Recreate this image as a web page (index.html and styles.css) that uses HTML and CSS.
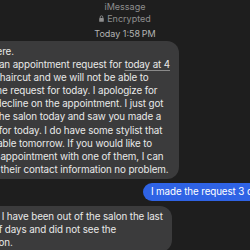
FILE: index.html
```html
<!DOCTYPE html>
<html lang="en">
<head>
<meta charset="utf-8">
<title>Messages</title>
<link rel="stylesheet" href="styles.css">
</head>
<body>
<div class="screen">
  <header class="head">
    <div class="service">iMessage</div>
    <div class="enc"><svg class="lock" width="5" height="7" viewBox="0 0 5 7"><path d="M1.2 3.2V2.1a1.3 1.3 0 0 1 2.6 0v1.1" fill="none" stroke="currentColor" stroke-width="0.9"/><rect x="0.2" y="3.1" width="4.6" height="3.7" rx="0.6" fill="currentColor"/></svg><span>Encrypted</span></div>
    <div class="time">Today 1:58&#8239;PM</div>
  </header>
  <div class="thread">
    <div class="bubble in">
      <span class="ln">Hi, Tia here.</span>
      <span class="ln">Just got an appointment request for <span class="dd">today at 4</span></span>
      <span class="ln">pm for a haircut and we will not be able to</span>
      <span class="ln">accept the request for today. I apologize for</span>
      <span class="ln">the late decline on the appointment. I just got</span>
      <span class="ln">back to the salon today and saw you made a</span>
      <span class="ln">booking for today. I do have some stylist that</span>
      <span class="ln">are available tomorrow. If you would like to</span>
      <span class="ln">make an appointment with one of them, I can</span>
      <span class="ln">give you their contact information no problem.</span>
    </div>
    <div class="bubble out">I made the request 3 days ago.</div>
    <div class="bubble in">
      <span class="ln">Oh sorry I have been out of the salon the last</span>
      <span class="ln">couple of days and did not see the</span>
      <span class="ln">notification.</span>
    </div>
  </div>
</div>
</body>
</html>
```

FILE: styles.css
```css
html, body {
  margin: 0;
  padding: 0;
  background: #1e1e1e;
}

body {
  font-family: Inter, "Noto Sans", sans-serif;
}

.screen {
  width: 250px;
  height: 250px;
  overflow: hidden;
}

.head {
  display: flex;
  flex-direction: column;
  align-items: center;
  padding-top: 1.25px;
  font-size: 9px;
  line-height: 11.5px;
  color: #8e8e8e;
}

.enc {
  display: flex;
  align-items: center;
  gap: 3px;
}

.lock {
  display: block;
}

.time {
  margin-top: 4px;
  color: #b4b4b4;
}

.thread {
  display: flex;
  flex-direction: column;
  width: 347.5px;
  margin-left: -48.5px;
  margin-top: 1.25px;
}

.bubble {
  border-radius: 12px;
  font-size: 9.8px;
  line-height: 13.1px;
  letter-spacing: -0.1px;
  white-space: nowrap;
}

.in {
  align-self: flex-start;
  background: #3b3b3c;
  color: #e9e9e9;
  padding: 4px 9px 3px 8px;
}

.ln {
  display: block;
}

.dd {
  text-decoration: underline;
  text-decoration-color: #8a8a8a;
  text-underline-offset: 2px;
}

.out {
  align-self: flex-end;
  background: #2f63e5;
  color: #ffffff;
  padding: 2.5px 8px 3px;
  margin: 3.7px 0 4.5px;
}
```
